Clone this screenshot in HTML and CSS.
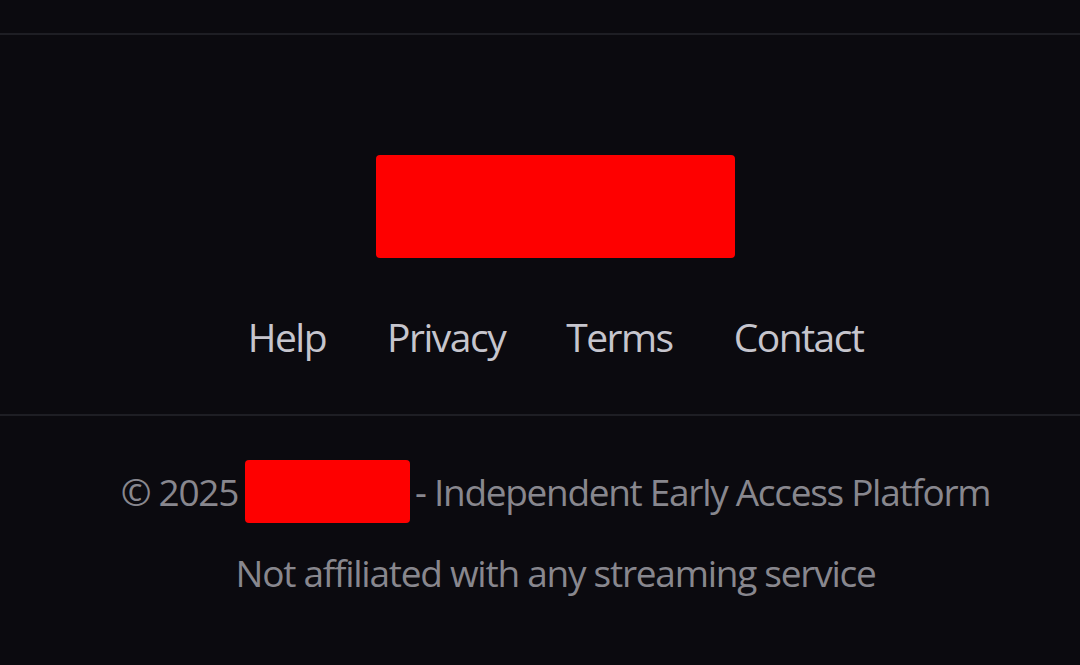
FILE: index.html
```html
<!DOCTYPE html>
<html lang="en">
<head>
<meta charset="utf-8">
<title>Footer</title>
<link rel="stylesheet" href="styles.css">
</head>
<body>
<div class="topbar"></div>
<footer class="footer">
  <div class="upper">
    <div class="logo-block"></div>
    <nav class="links">
      <a href="#">Help</a>
      <a href="#">Privacy</a>
      <a href="#">Terms</a>
      <a href="#">Contact</a>
    </nav>
  </div>
  <div class="bottom">
    <p class="copy">© 2025 <span class="name-block"></span> - Independent Early Access Platform</p>
    <p class="note">Not affiliated with any streaming service</p>
  </div>
</footer>
</body>
</html>
```
FILE: styles.css
```css
* { box-sizing: border-box; }
html, body {
  margin: 0;
  padding: 0;
  background: #0b0a0f;
  height: 100%;
}
body {
  font-family: "Open Sans", "Noto Sans", sans-serif;
  overflow: hidden;
}
.topbar {
  height: 35px;
  border-bottom: 2px solid #1e1e24;
}
.footer {
  display: flex;
  flex-direction: column;
}
.upper {
  display: flex;
  flex-direction: column;
  align-items: center;
  padding: 120px 0 0 31px;
}
.logo-block {
  width: 359px;
  height: 103px;
  background: #fe0000;
  border-radius: 4px;
}
.links {
  display: flex;
  gap: 61px;
  margin-top: 49px;
}
.links a {
  color: #c6c5cd;
  text-decoration: none;
  font-size: 39px;
  letter-spacing: -1.5px;
  line-height: 60px;
}
.bottom {
  margin-top: 47px;
  border-top: 2px solid #1e1e24;
  display: flex;
  flex-direction: column;
  align-items: center;
  padding: 44px 0 0 31px;
}
.bottom p {
  margin: 0;
  color: #88878e;
  font-size: 37px;
  letter-spacing: -1.3px;
  line-height: 50px;
}
.copy {
  display: flex;
  align-items: center;
}
.name-block {
  display: inline-block;
  width: 165px;
  height: 63px;
  background: #fe0000;
  border-radius: 4px;
  margin: 0 5px 0 7px;
}
.bottom .note {
  margin-top: 25px;
  letter-spacing: -1.25px;
}
```
